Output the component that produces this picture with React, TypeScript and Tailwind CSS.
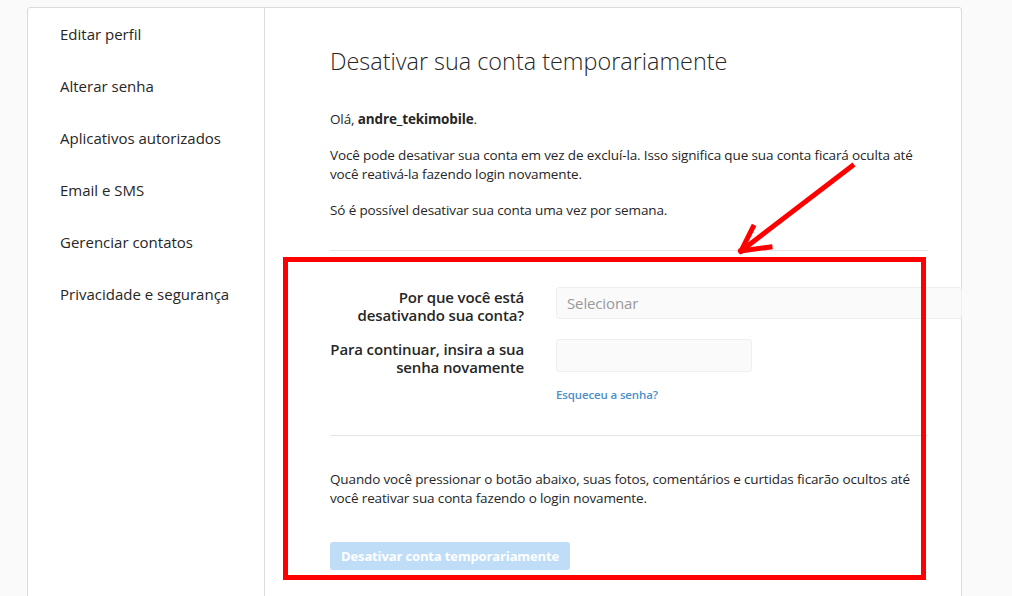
const font = { fontFamily: '"Open Sans", "Noto Sans", sans-serif' };

const menu = [
  "Editar perfil",
  "Alterar senha",
  "Aplicativos autorizados",
  "Email e SMS",
  "Gerenciar contatos",
  "Privacidade e segurança",
];

function Sidebar() {
  return (
    <ul className="w-[237px] shrink-0 border-r border-[#dbdbdb]">
      {menu.map((m) => (
        <li key={m} className="h-[52px] flex items-center pl-[32px] text-[15px] text-[#262626]">
          {m}
        </li>
      ))}
    </ul>
  );
}

function FormRow({ label, children }: { label: React.ReactNode; children: React.ReactNode }) {
  return (
    <div className="flex items-start">
      <label className="w-[194px] shrink-0 pt-px whitespace-nowrap text-right text-[15px] leading-[18px] font-semibold tracking-[-0.01em] text-[#262626]">
        {label}
      </label>
      <div className="ml-[32px]">{children}</div>
    </div>
  );
}

export default function App() {
  return (
    <div className="relative w-[1012px] h-[596px] overflow-hidden bg-[#fafafa] pt-[7px] pl-[27px]" style={font}>
      <div className="flex w-[935px] h-[600px] bg-white border border-[#dbdbdb] rounded-[3px]">
        <Sidebar />

        <div className="flex-1 min-w-0 pl-[65px] pr-[33px] pt-[38px] text-[#262626] text-[13.5px] leading-[19px] tracking-[-0.01em]">
          <h1 className="text-[23.4px] leading-[30px] font-light tracking-normal">Desativar sua conta temporariamente</h1>

          <p className="mt-[34px]">
            Olá, <span className="font-bold">andre_tekimobile</span>.
          </p>
          <p className="mt-[17px]">
            Você pode desativar sua conta em vez de excluí-la. Isso significa que sua conta ficará oculta até
            você reativá-la fazendo login novamente.
          </p>
          <p className="mt-[17px]">Só é possível desativar sua conta uma vez por semana.</p>

          <div className="mt-[30px] border-t border-[#e6e6e6]" />

          <div className="mt-[36px]">
            <FormRow
              label={
                <>
                  Por que você está
                  <br />
                  desativando sua conta?
                </>
              }
            >
              <div className="w-[406px] h-[32px] flex items-center px-[10px] border border-[#efefef] rounded-[3px] bg-[#fafafa] text-[15px] text-[#999]">
                Selecionar
              </div>
            </FormRow>
          </div>

          <div className="mt-[15px]">
            <FormRow
              label={
                <>
                  Para continuar, insira a sua
                  <br />
                  senha novamente
                </>
              }
            >
              <input
                type="password"
                className="block w-[196px] h-[33px] border border-[#efefef] rounded-[3px] bg-[#fafafa] outline-none"
              />
              <a className="block mt-[15px] text-[11.5px] leading-[16px] font-semibold text-[#4b8fca]">Esqueceu a senha?</a>
            </FormRow>
          </div>

          <div className="mt-[32px] border-t border-[#e6e6e6]" />

          <p className="mt-[34px]">
            Quando você pressionar o botão abaixo, suas fotos, comentários e curtidas ficarão ocultos até
            você reativar sua conta fazendo o login novamente.
          </p>

          <button className="mt-[34px] h-[28px] px-[11px] rounded-[3px] bg-[#c0ddf8] text-white text-[13px] font-bold tracking-[-0.01em]">
            Desativar conta temporariamente
          </button>
        </div>
      </div>

      {/* red highlight box + arrow */}
      <div className="absolute left-[283px] top-[257px] w-[643px] h-[323px] border-[5px] border-[#ff0000]" />
      <svg className="absolute left-0 top-0" width="1012" height="596">
        <g stroke="#ff0000" strokeWidth="5" strokeLinecap="square" fill="none">
          <line x1="852" y1="166" x2="741" y2="251" />
          <line x1="741" y1="251" x2="753" y2="227" />
          <line x1="741" y1="251" x2="770" y2="247" />
        </g>
      </svg>
    </div>
  );
}
